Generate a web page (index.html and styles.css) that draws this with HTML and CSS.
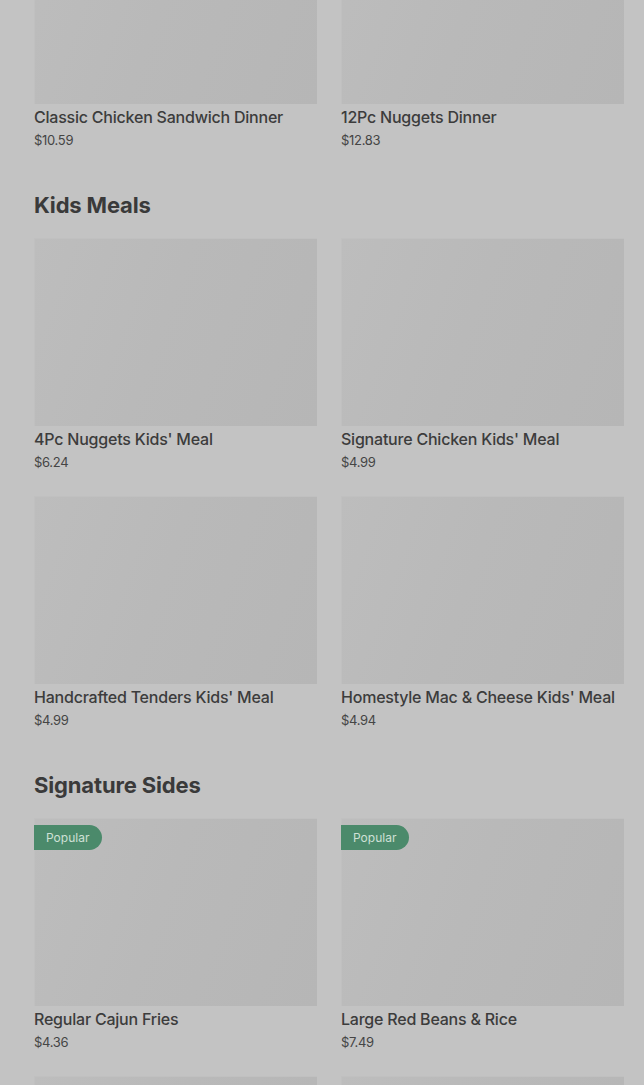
FILE: index.html
```html
<!DOCTYPE html>
<html lang="en">
<head>
<meta charset="utf-8">
<title>Menu</title>
<link rel="stylesheet" href="styles.css">
</head>
<body>
<main class="page">
  <section class="section first">
    <div class="grid">
      <article class="card">
        <div class="thumb"></div>
        <h3 class="name">Classic Chicken Sandwich Dinner</h3>
        <p class="price">$10.59</p>
      </article>
      <article class="card">
        <div class="thumb"></div>
        <h3 class="name">12Pc Nuggets Dinner</h3>
        <p class="price">$12.83</p>
      </article>
    </div>
  </section>

  <section class="section">
    <h2 class="heading">Kids Meals</h2>
    <div class="grid">
      <article class="card">
        <div class="thumb"></div>
        <h3 class="name">4Pc Nuggets Kids' Meal</h3>
        <p class="price">$6.24</p>
      </article>
      <article class="card">
        <div class="thumb"></div>
        <h3 class="name">Signature Chicken Kids' Meal</h3>
        <p class="price">$4.99</p>
      </article>
      <article class="card">
        <div class="thumb"></div>
        <h3 class="name">Handcrafted Tenders Kids' Meal</h3>
        <p class="price">$4.99</p>
      </article>
      <article class="card">
        <div class="thumb"></div>
        <h3 class="name">Homestyle Mac &amp; Cheese Kids' Meal</h3>
        <p class="price">$4.94</p>
      </article>
    </div>
  </section>

  <section class="section">
    <h2 class="heading">Signature Sides</h2>
    <div class="grid">
      <article class="card">
        <div class="thumb"><span class="badge">Popular</span></div>
        <h3 class="name">Regular Cajun Fries</h3>
        <p class="price">$4.36</p>
      </article>
      <article class="card">
        <div class="thumb"><span class="badge">Popular</span></div>
        <h3 class="name">Large Red Beans &amp; Rice</h3>
        <p class="price">$7.49</p>
      </article>
      <article class="card">
        <div class="thumb"></div>
      </article>
      <article class="card">
        <div class="thumb"></div>
      </article>
    </div>
  </section>
</main>
</body>
</html>
```

FILE: styles.css
```css
html, body {
  margin: 0;
  padding: 0;
  background: #c3c3c3;
  overflow: hidden;
}

body {
  font-family: Inter, "Noto Sans", "Liberation Sans", sans-serif;
  color: #3b3b3b;
}

.page {
  padding: 0 20px 0 34px;
  margin-top: -84px;
}

.section {
  margin-top: 39px;
}

.section.first {
  margin-top: 0;
}

.heading {
  margin: 0 0 17px;
  font-size: 22px;
  line-height: 32px;
  font-weight: 700;
  letter-spacing: -0.15px;
  color: #3a3a3a;
}

.grid {
  display: grid;
  grid-template-columns: 283px 283px;
  column-gap: 24px;
  row-gap: 24px;
}

.card {
  margin: 0;
}

.thumb {
  position: relative;
  height: 188px;
  background: linear-gradient(110deg, #bdbdbd 0%, #b9b9b9 45%, #b6b6b6 100%);
  box-shadow: inset 1px 1px 0 #c0c0c0;
}

.badge {
  position: absolute;
  top: 7px;
  left: 0;
  height: 25px;
  padding: 0 13px 0 12px;
  display: flex;
  align-items: center;
  background: #4b8a6b;
  color: #cfe0d6;
  font-size: 12px;
  font-weight: 400;
  border-radius: 0 13px 13px 0;
}

.name {
  margin: 2px 0 0;
  font-size: 16px;
  line-height: 22px;
  font-weight: 500;
  letter-spacing: -0.22px;
  color: #3c3c3c;
  white-space: nowrap;
}

.price {
  margin: 2px 0 0;
  font-size: 13px;
  line-height: 20px;
  font-weight: 400;
  letter-spacing: -0.3px;
  color: #454545;
}
```
